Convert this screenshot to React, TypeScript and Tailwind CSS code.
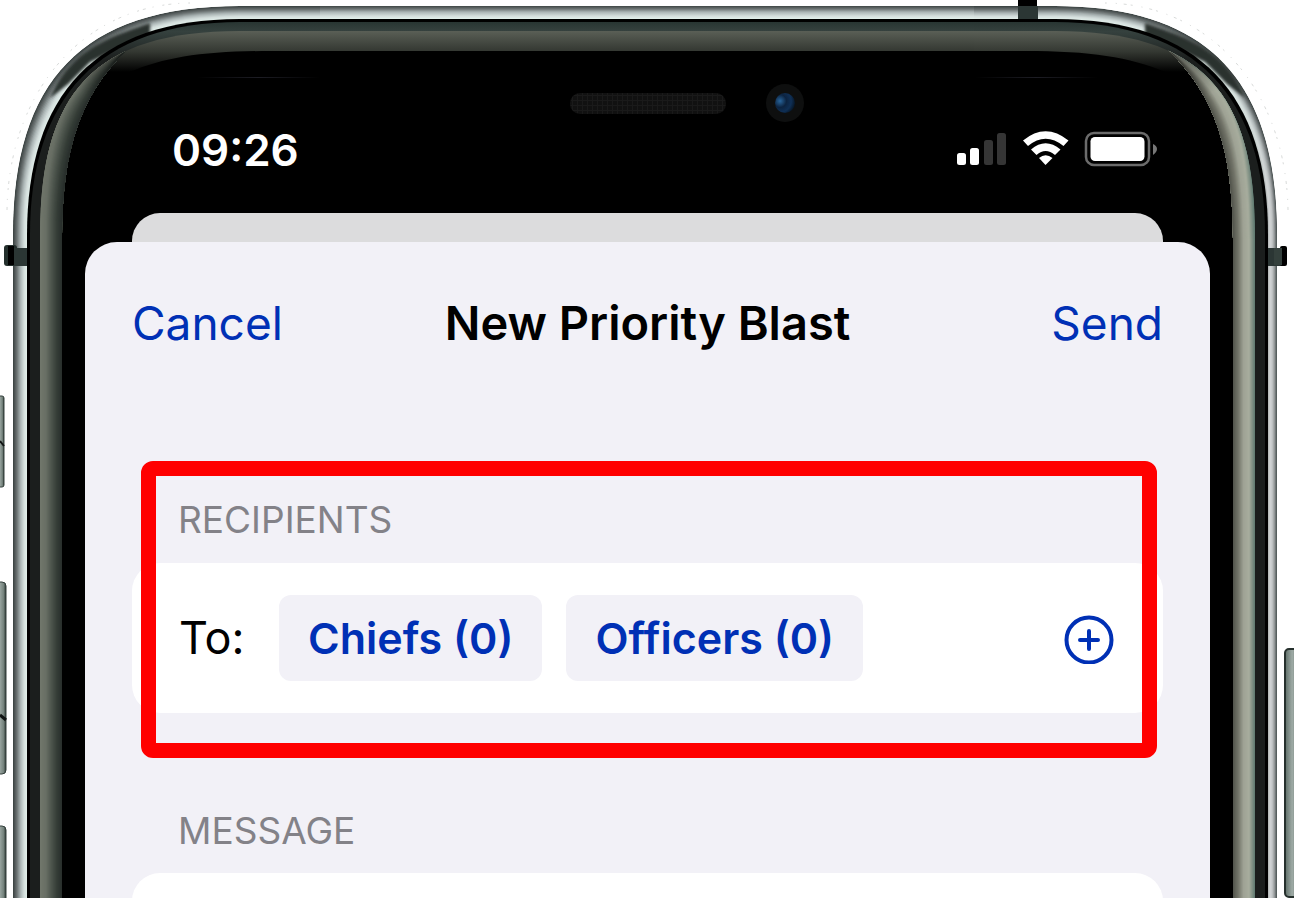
import type { ReactNode } from 'react'

type Side = 'left' | 'right'

// Body outline: straight side at x, straight top at y, one long soft corner
const outline = (x: number, y: number, bend = 68) =>
  `M${x} 3000V235C${x} ${y + bend + 8} ${x + bend} ${y} 240 ${y}H330V3000Z`

const mix = (a: number[], b: number[], t: number) => a.map((v, i) => Math.round(v + (b[i] - v) * t))

const shade = (stops: number[][], t: number) => {
  const pos = t * (stops.length - 1)
  const i = Math.min(Math.floor(pos), stops.length - 2)
  return `rgb(${mix(stops[i], stops[i + 1], pos - i).join(',')})`
}

const steps = (n: number) => Array.from({ length: n }, (_, i) => i / (n - 1))

const topRail = [[62, 70, 69], [110, 117, 117], [170, 180, 180], [212, 222, 220], [226, 240, 235]]

const finish = {
  left: {
    railX: 13,
    rail: topRail,
    bezel: [[112, 118, 107], [104, 110, 100], [76, 84, 76], [52, 60, 54], [38, 44, 42]],
  },
  right: {
    railX: 18,
    rail: [[80, 88, 88], [150, 154, 156], [196, 200, 201], [212, 214, 215], [166, 172, 172]],
    bezel: [[100, 125, 115], [168, 173, 158], [158, 162, 148], [112, 114, 103], [78, 80, 72]],
  },
}

function Rail({ x, stops }: { x: number; stops: number[][] }) {
  return steps(14).map((t) => (
    <path key={t} d={outline(x + (27 - x) * t, 6 + 13 * t)} fill={shade(stops, t)} />
  ))
}

function Corner({ side, children }: { side: Side; children: ReactNode }) {
  const { railX, rail, bezel } = finish[side]

  return (
    <svg className="h-full w-80 shrink-0" aria-hidden="true">
      <defs>
        <linearGradient id={`${side}-top`} gradientUnits="userSpaceOnUse" x1="0" y1="31" x2="0" y2="72">
          <stop offset="0" stopColor="#5a5f56" />
          <stop offset="0.5" stopColor="#343832" />
          <stop offset="1" stopColor="#000" />
        </linearGradient>
        <linearGradient id={`${side}-ring`} gradientUnits="userSpaceOnUse" x1="0" y1="22" x2="0" y2="60">
          <stop offset="0" stopColor="#283532" />
          <stop offset="0.25" stopColor="#35413e" />
          <stop offset="1" stopColor="#1b1e1d" />
        </linearGradient>
        <linearGradient id={`${side}-bezel-fade`} gradientUnits="userSpaceOnUse" x1="127" y1="45" x2="95" y2="100">
          <stop offset="0" stopColor="#000" stopOpacity="0.55" />
          <stop offset="1" stopColor="#000" stopOpacity="0" />
        </linearGradient>
        <linearGradient id={`${side}-fade`} gradientUnits="userSpaceOnUse" x1="0" y1="90" x2="0" y2="190">
          <stop offset="0" stopColor="#000" />
          <stop offset="1" stopColor="#fff" />
        </linearGradient>
        <mask id={`${side}-lower`} maskUnits="userSpaceOnUse" x="0" y="0" width="330" height="3000">
          <rect width="330" height="3000" fill={`url(#${side}-fade)`} />
        </mask>
        <linearGradient id={`${side}-line`} x1="0" x2="1">
          <stop offset="0" stopColor="#000" />
          <stop offset="0.5" stopColor="#1d1d24" />
          <stop offset="1" stopColor="#000" />
        </linearGradient>
        <linearGradient id={`${side}-key`} x1="0" x2="1">
          <stop offset="0" stopColor="#5d6d67" />
          <stop offset="0.45" stopColor="#9eaaa5" />
          <stop offset="0.8" stopColor="#74827c" />
          <stop offset="1" stopColor="#2b3632" />
        </linearGradient>
        <clipPath id={`${side}-clip`}>
          <path d={outline(40, 31, 54)} />
        </clipPath>
        <clipPath id={`${side}-body`}>
          <path d={outline(railX, 6)} />
        </clipPath>
        <filter id={`${side}-soft`}>
          <feGaussianBlur stdDeviation="1.5" />
        </filter>
      </defs>

      <g transform={side === 'right' ? 'translate(321 0) scale(-1 1)' : undefined}>
        <path
          d="M7 210C9 90 85 4 190 3"
          fill="none"
          stroke="#d9dbda"
          strokeDasharray="3 7 1 9 2 4"
        />
        <g clipPath={`url(#${side}-body)`}>
          <Rail x={railX} stops={topRail} />
          <g mask={`url(#${side}-lower)`}>
            <Rail x={railX} stops={rail} />
          </g>
          <path
            d="M50 98C56 84 62 74 72 64C90 45 115 34 150 23L150 34L90 62L68 84Z"
            fill="#2b302f"
            filter={`url(#${side}-soft)`}
          />
        </g>
        <path d={outline(27, 19)} fill="#000" />
        <path d={outline(30, 22)} fill={`url(#${side}-ring)`} />
        <path d={outline(40, 31, 54)} fill={`url(#${side}-top)`} />
        <path d="M100 72H130C165 57 205 51 270 51H330V3000H100Z" fill="#000" />
        <g clipPath={`url(#${side}-clip)`}>
          <path d="M0 3000V0H127V50C80 95 62 150 62 240V3000Z" fill={shade(bezel, 0)} />
          {steps(23).map((t) => {
            const x = 40 + 22 * t
            return (
              <path
                key={t}
                d={`M${x} 3000V240C${x} ${102 + 48 * t} ${67 + 13 * t} ${79 + 16 * t} 127 50C80 95 62 150 62 240V3000Z`}
                fill={shade(bezel, t)}
              />
            )
          })}
          <path d="M0 240V0H127V50C80 95 62 150 62 240Z" fill={`url(#${side}-bezel-fade)`} />
        </g>
        <rect x="197" y="77" width="123" height="1" fill={`url(#${side}-line)`} />
      </g>
      {children}
    </svg>
  )
}

function PhoneBody() {
  return (
    <div className="absolute inset-0 flex">
      <Corner side="left">
        <rect x="4" y="245" width="13" height="21" rx="3" fill="#24302d" />
        <rect x="8" y="246" width="6" height="19" fill="#000" />
        <rect x="14" y="248" width="13" height="18" fill="#2b3634" />
        <rect x="-4" y="396" width="8" height="91" rx="2" fill="url(#left-key)" stroke="#34403c" />
        <path d="M0 441L4 446" stroke="#101413" strokeWidth="2" />
        <rect x="-6" y="582" width="12" height="192" rx="4" fill="url(#left-key)" stroke="#34403c" />
        <path d="M0 715L6 720" stroke="#101413" strokeWidth="3" />
        <rect x="-6" y="826" width="12" height="200" rx="4" fill="url(#left-key)" stroke="#34403c" />
      </Corner>
      <div className="flex-1 bg-[linear-gradient(to_bottom,#fff_6px,#3e4645_6px,#6e7575_9px,#aab4b4_12px,#d4dedc_16px,#e2f0eb_19px,#000_19px,#000_22px,#283532_22px,#35413e_31px,#5a5f56_31px,#343832_51px,#000_51px)]" />
      <Corner side="right">
        <rect x="44" y="0" width="19" height="7" fill="#000" />
        <rect x="44" y="6" width="20" height="13" fill="#2b3634" />
        <rect x="294" y="248" width="14" height="18" fill="#2b3634" />
        <rect x="306" y="246" width="7" height="20" rx="2" fill="#000" />
        <rect x="300" y="248" width="8" height="17" fill="#34403c" />
        <rect x="311" y="649" width="16" height="248" rx="4" fill="url(#right-key)" stroke="#26302d" strokeWidth="2" />
      </Corner>
    </div>
  )
}

function FrontSensors() {
  return (
    <svg className="absolute left-1/2 top-20 h-11 w-80 -translate-x-1/2" viewBox="0 0 320 44" aria-hidden="true">
      <defs>
        <pattern id="mesh" width="5" height="5" patternUnits="userSpaceOnUse">
          <rect width="5" height="5" fill="#111" />
          <path d="M0 0H5M0 0V5" stroke="#1a1a1a" strokeWidth="2" />
        </pattern>
        <radialGradient id="lens" cx="0.25" cy="0.4" r="0.8">
          <stop offset="0" stopColor="#28659c" />
          <stop offset="0.4" stopColor="#0c2340" />
          <stop offset="0.7" stopColor="#0f2f55" />
          <stop offset="1" stopColor="#04101c" />
        </radialGradient>
      </defs>
      <rect x="83" y="13" width="156" height="21" rx="10" fill="url(#mesh)" />
      <circle cx="298" cy="23" r="19" fill="#0e0f0f" />
      <circle cx="298" cy="23" r="10" fill="url(#lens)" />
    </svg>
  )
}

function StatusIcons() {
  return (
    <svg className="h-10 w-52" viewBox="0 0 208 40" aria-label="Signal, Wi-Fi and battery">
      <rect x="7" y="23" width="9" height="12" rx="2.5" fill="#fff" />
      <rect x="20" y="18" width="9" height="17" rx="2.5" fill="#fff" />
      <rect x="34" y="10" width="9" height="25" rx="2.5" fill="#353535" />
      <rect x="47" y="3" width="9" height="32" rx="2.5" fill="#353535" />
      <g fill="#fff">
        <path d="M73 10.5Q95.5 -8 118.5 10.5L113.500 16Q95.5 1.5 78 16Z" />
        <path d="M81 19.5Q95.5 7 110.5 19.5L105 25Q95.5 17 86.5 25Z" />
        <path d="M89 28Q95.5 22.5 102.5 28L95.5 35Z" />
      </g>
      <rect x="136" y="3" width="63" height="32" rx="8" fill="none" stroke="#6b6b6b" strokeWidth="2.5" />
      <rect x="140.5" y="7" width="54" height="24" rx="4.5" fill="#fff" />
      <path d="M203 14Q207 16 207 19T203 25Z" fill="#777" />
    </svg>
  )
}

function Chip({ children }: { children: ReactNode }) {
  return (
    <button type="button" className="h-[86px] rounded-xl bg-[#f2f1f7] px-[29px] text-[43px] font-semibold text-[#0030b5]">
      {children}
    </button>
  )
}

export default function App() {
  return (
    <div className="relative flex min-h-screen flex-col overflow-hidden bg-white font-['Inter','Liberation_Sans',sans-serif] text-black">
      <PhoneBody />
      <FrontSensors />

      <div className="relative flex flex-1 flex-col pl-[85px] pr-[84px] pt-[120px]">
        {/* Status bar */}
        <div className="flex h-[60px] items-center justify-between pl-[87px] pr-[52px] text-white">
          <time className="text-[44px] font-semibold">09:26</time>
          <StatusIcons />
        </div>

        {/* Sheet behind the current one */}
        <div className="mx-[47px] mt-[33px] h-[29px] rounded-t-[28px] bg-[#dcdcdd]" />

        <form className="flex flex-1 flex-col rounded-t-[32px] bg-[#f2f1f7] px-[47px]">
          <header className="flex h-[162px] items-center justify-between text-[46px]">
            <button type="button" className="flex-1 text-left text-[#0030b5]">Cancel</button>
            <h1 className="text-[47px] font-semibold">New Priority Blast</h1>
            <button type="submit" className="flex-1 text-right text-[#0030b5]">Send</button>
          </header>

          <section className="relative mt-[57px] pb-[45px] pt-[37px]">
            <h2 className="px-[46px] text-[37px] leading-[44px] text-[#838288]">RECIPIENTS</h2>
            <div className="mt-[21px] flex h-[150px] items-center rounded-[28px] bg-white px-[47px]">
              <span className="w-[100px] text-[45px]">To:</span>
              <div className="flex flex-1 gap-6">
                <Chip>Chiefs (0)</Chip>
                <Chip>Officers (0)</Chip>
              </div>
              <button type="button" aria-label="Add recipient" className="text-[#0030b5]">
                <svg className="size-[52px]" viewBox="0 0 52 52" fill="none" stroke="currentColor" strokeWidth="4" strokeLinecap="round">
                  <circle cx="25" cy="28" r="22.5" />
                  <path d="M25 19V37M16 28H34" />
                </svg>
              </button>
            </div>
            {/* Callout around the recipients */}
            <div className="pointer-events-none absolute inset-y-0 left-[9px] right-[6px] rounded-xl border-[15px] border-[#ff0000]" />
          </section>

          <section className="mt-[51px] flex flex-1 flex-col">
            <label htmlFor="message" className="px-[46px] text-[37px] leading-[44px] text-[#838288]">MESSAGE</label>
            <textarea id="message" className="mt-5 min-h-0 flex-1 resize-none rounded-t-[28px] bg-white px-[46px] text-[46px] outline-none" rows={1} />
          </section>
        </form>
      </div>
    </div>
  )
}
